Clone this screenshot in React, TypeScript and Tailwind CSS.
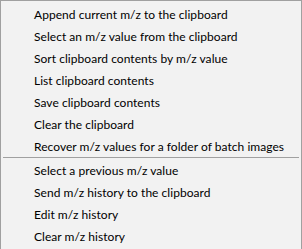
const groups: string[][] = [
  [
    'Append current m/z to the clipboard',
    'Select an m/z value from the clipboard',
    'Sort clipboard contents by m/z value',
    'List clipboard contents',
    'Save clipboard contents',
    'Clear the clipboard',
    'Recover m/z values for a folder of batch images',
  ],
  [
    'Select a previous m/z value',
    'Send m/z history to the clipboard',
    'Edit m/z history',
    'Clear m/z history',
  ],
]

const MenuItem = ({ label, last }: { label: string; last?: boolean }) => (
  <div className={`flex items-center pl-[33px] whitespace-nowrap ${last ? 'h-[21px]' : 'h-[22px]'}`}>
    <span className="leading-none tracking-[0.04px]">{label}</span>
  </div>
)

export default function App() {
  return (
    <div
      className="w-[302px] h-[249px] overflow-hidden bg-[#f2f2f2] border-l border-t border-r border-[#a0a0a0] text-[12px] text-black"
      style={{ fontFamily: 'Lato, "Noto Sans", sans-serif' }}
    >
      <div className="pt-[3px]">
        {groups[0].map((label, i) => (
          <MenuItem key={label} label={label} last={i === groups[0].length - 1} />
        ))}
        <div className="h-[3px] mx-[2px] border-t border-[#a0a0a0]" />
        {groups[1].map((label) => (
          <MenuItem key={label} label={label} />
        ))}
      </div>
    </div>
  )
}
